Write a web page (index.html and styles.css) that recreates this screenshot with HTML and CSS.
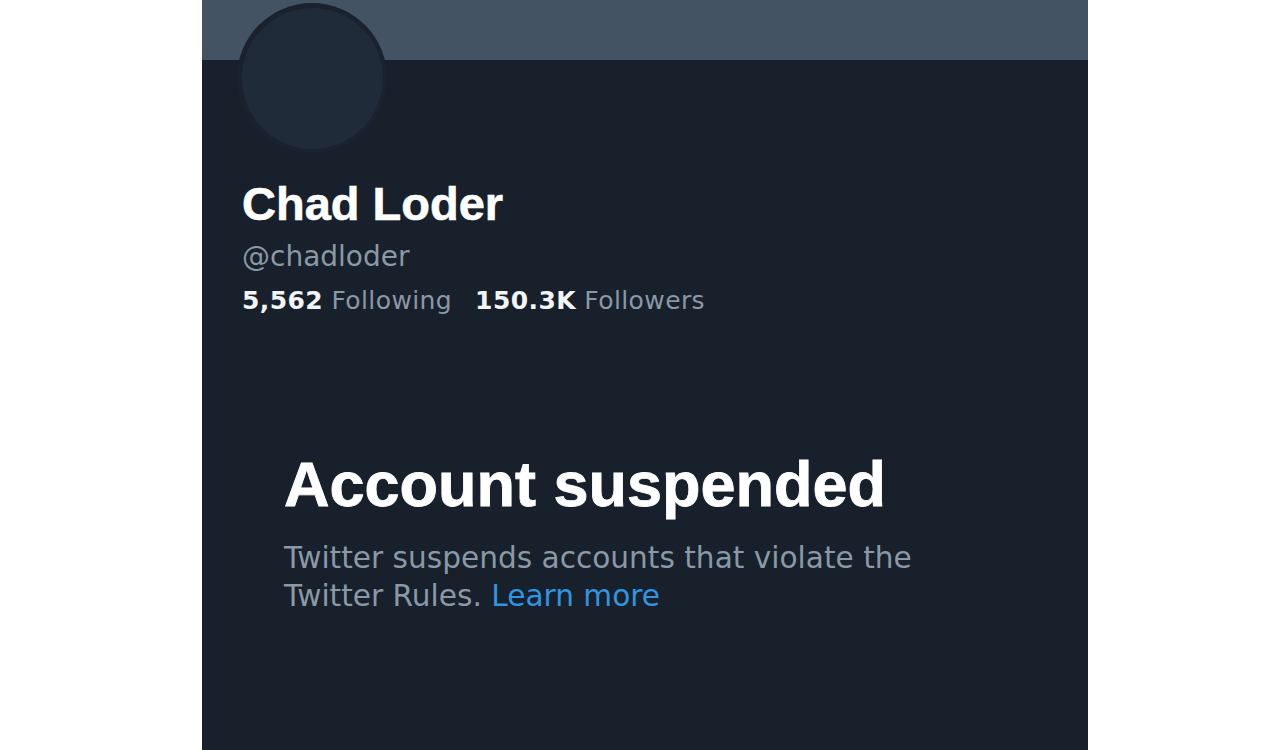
FILE: index.html
```html
<!DOCTYPE html>
<html lang="en">
<head>
<meta charset="utf-8">
<title>Chad Loder (@chadloder)</title>
<link rel="stylesheet" href="styles.css">
</head>
<body>
<main class="panel">
  <div class="banner"></div>
  <div class="avatar"><div class="avatar-inner"></div></div>
  <section class="profile">
    <h1 class="name">Chad Loder</h1>
    <div class="handle">@chadloder</div>
    <div class="stats">
      <span class="stat"><b>5,562</b> Following</span>
      <span class="stat"><b>150.3K</b> Followers</span>
    </div>
  </section>
  <section class="suspended">
    <h2 class="title">Account suspended</h2>
    <p class="desc">Twitter suspends accounts that violate the Twitter Rules. <a href="#" class="link">Learn more</a></p>
  </section>
</main>
</body>
</html>
```
FILE: styles.css
```css
html, body {
  margin: 0;
  padding: 0;
  background: #ffffff;
  height: 100%;
}
body {
  overflow: hidden;
}
.panel {
  margin-left: 202px;
  width: 886px;
  height: 750px;
  background: #17202b;
  display: flex;
  flex-direction: column;
}
.banner {
  height: 60px;
  background: #435364;
  flex-shrink: 0;
}
.avatar {
  margin-top: -57px;
  margin-left: 35px;
  width: 150px;
  height: 150px;
  border-radius: 50%;
  background: #19222e;
  display: flex;
  align-items: center;
  justify-content: center;
  flex-shrink: 0;
}
.avatar-inner {
  width: 141px;
  height: 141px;
  border-radius: 50%;
  background: #202b39;
}
.profile {
  padding-left: 40px;
  margin-top: 25px;
}
.name {
  margin: 0;
  font-family: "Liberation Sans", Arial, sans-serif;
  font-weight: 700;
  font-size: 47px;
  line-height: 52px;
  color: #ffffff;
  -webkit-text-stroke: 0.6px #ffffff;
}
.handle {
  margin-top: 9px;
  font-family: "DejaVu Sans", sans-serif;
  font-size: 28px;
  line-height: 36px;
  color: #8b98a5;
}
.stats {
  margin-top: 10px;
  display: flex;
  gap: 23px;
  font-family: "DejaVu Sans", sans-serif;
  font-size: 25px;
  line-height: 32px;
  letter-spacing: 0.4px;
  color: #8b98a5;
}
.stats b {
  color: #f2f4f5;
  font-weight: 700;
}
.suspended {
  padding-left: 82px;
  margin-top: 131px;
}
.title {
  margin: 0;
  font-family: "Liberation Sans", Arial, sans-serif;
  font-weight: 700;
  font-size: 63px;
  line-height: 72px;
  color: #ffffff;
  -webkit-text-stroke: 0.8px #ffffff;
}
.desc {
  margin: 19px 0 0 0;
  width: 660px;
  font-family: "DejaVu Sans", sans-serif;
  font-size: 29.6px;
  line-height: 38px;
  color: #8b98a5;
}
.link {
  color: #2f95e0;
  text-decoration: none;
}
```
